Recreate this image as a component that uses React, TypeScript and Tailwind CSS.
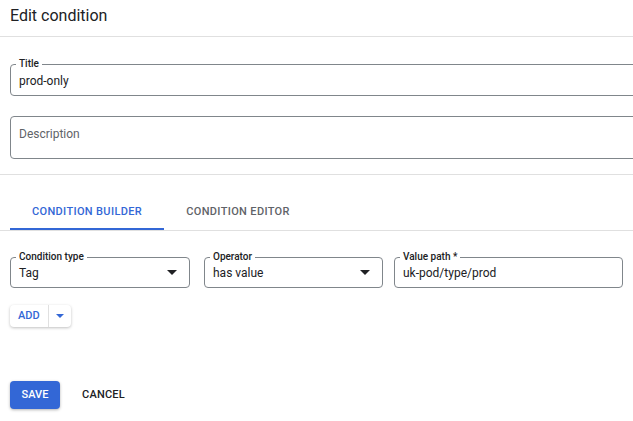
import { useState } from 'react';

const font = { fontFamily: 'Roboto, "Liberation Sans", Arial, sans-serif' };

function Caret({ className = '' }: { className?: string }) {
  return (
    <svg viewBox="0 0 10 5" className={className} fill="currentColor">
      <path d="M0 0h10L5 5z" />
    </svg>
  );
}

function OutlinedField({
  label,
  value,
  width,
  select,
}: {
  label: string;
  value: string;
  width: string;
  select?: boolean;
}) {
  return (
    <div className={`relative h-[31px] shrink-0 rounded-[4px] border border-[#80868b] ${width}`}>
      <span className="absolute -top-[7px] left-[5px] bg-white px-[3px] text-[10px] font-medium leading-[12px] text-[#202124]">
        {label}
      </span>
      <div className="flex h-full items-center justify-between pl-[8px] pr-[12px] pt-[1px] text-[12px] text-[#202124]">
        <span>{value}</span>
        {select && <Caret className="h-[5px] w-[10px] text-[#202124]" />}
      </div>
    </div>
  );
}

export default function App() {
  const [tab, setTab] = useState<'builder' | 'editor'>('builder');

  return (
    <div className="h-screen w-screen overflow-hidden bg-white" style={font}>
      <div className="flex h-[37px] items-center border-b border-[#e0e0e0] px-[10px] pb-[5px]">
        <h1 className="text-[16px] text-[#202124]">Edit condition</h1>
      </div>

      <div className="flex flex-col pl-[10px]">
        <div className="relative mt-[27px] h-[32px] w-[640px] rounded-[4px] border border-[#80868b]">
          <span className="absolute -top-[7px] left-[5px] bg-white px-[3px] text-[10px] font-medium leading-[12px] text-[#202124]">
            Title
          </span>
          <div className="flex h-full items-center px-[8px] pt-[1px] text-[12px] text-[#202124]">prod-only</div>
        </div>

        <div className="mt-[20px] h-[43px] w-[640px] rounded-[4px] border border-[#80868b] px-[8px] pt-[8px] text-[12px] text-[#5f6368]">
          Description
        </div>
      </div>

      <div className="mt-[15px] border-b border-[#e0e0e0]" />

      <div className="mt-[29px] flex border-b border-[#e0e0e0] pl-[10px]">
        <button
          onClick={() => setTab('builder')}
          className={`w-[154px] border-b-2 pb-[7px] text-center text-[11px] font-medium tracking-[0.35px] ${
            tab === 'builder' ? 'border-[#3367d6] text-[#3367d6]' : 'border-transparent text-[#5f6368]'
          }`}
        >
          CONDITION BUILDER
        </button>
        <button
          onClick={() => setTab('editor')}
          className={`w-[148px] border-b-2 pb-[7px] text-center text-[11px] font-medium tracking-[0.35px] ${
            tab === 'editor' ? 'border-[#3367d6] text-[#3367d6]' : 'border-transparent text-[#5f6368]'
          }`}
        >
          CONDITION EDITOR
        </button>
      </div>

      <div className="mt-[26px] flex pl-[10px]">
        <OutlinedField label="Condition type" value="Tag" width="w-[180px]" select />
        <div className="w-[14px]" />
        <OutlinedField label="Operator" value="has value" width="w-[179px]" select />
        <div className="w-[11px]" />
        <OutlinedField label="Value path *" value="uk-pod/type/prod" width="w-[229px]" />
      </div>

      <div className="mt-[14px] pl-[10px]">
        <div className="inline-flex h-[22px] items-stretch rounded-[4px] bg-white shadow-[0_1px_3px_rgba(0,0,0,0.25)]">
          <button className="px-[8px] text-[11px] font-medium text-[#3367d6]">ADD</button>
          <div className="w-px bg-[#e0e0e0]" />
          <button className="flex w-[22px] items-center justify-center text-[#3367d6]">
            <Caret className="h-[4px] w-[8px]" />
          </button>
        </div>
      </div>

      <div className="mt-[54px] flex items-center gap-[12px] pl-[10px]">
        <button className="h-[28px] w-[50px] rounded-[4px] bg-[#3367d6] text-[11px] font-medium text-white shadow-[0_1px_3px_rgba(0,0,0,0.3)]">
          SAVE
        </button>
        <button className="h-[28px] px-[10px] text-[11px] font-medium tracking-[0.2px] text-[#202124]">CANCEL</button>
      </div>
    </div>
  );
}
